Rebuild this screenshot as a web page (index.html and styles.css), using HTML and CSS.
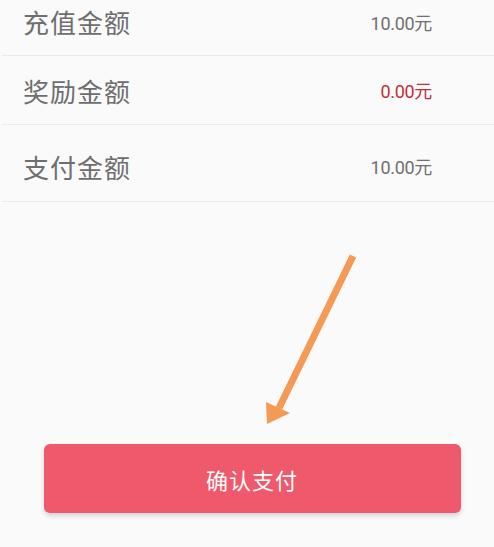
FILE: index.html
```html
<!DOCTYPE html>
<html lang="zh-CN">
<head>
    <meta charset="UTF-8">
    <meta name="viewport" content="width=device-width, initial-scale=1.0">
    <title>确认支付</title>
    <link rel="stylesheet" href="styles.css">
</head>
<body>

    <div class="page">
        <div class="list">
            <div class="row row-first">
                <span class="label">充值金额</span>
                <span class="value">10.00元</span>
            </div>
            <div class="row row-second">
                <span class="label">奖励金额</span>
                <span class="value value-red">0.00元</span>
            </div>
            <div class="row row-third">
                <span class="label">支付金额</span>
                <span class="value">10.00元</span>
            </div>
        </div>

        <div class="footer">
            <button class="pay-button">确认支付</button>
        </div>

        <!-- annotation arrow over the page -->
        <svg class="arrow" width="494" height="547" viewBox="0 0 494 547">
            <line x1="353" y1="256" x2="279" y2="408" stroke="#f59a55" stroke-width="7" />
            <polygon points="267,424 266,402 290,413" fill="#f59a55" />
        </svg>
    </div>

</body>
</html>
```

FILE: styles.css
```css
html, body {
    margin: 0;
    padding: 0;
    background-color: #fafafa;
}

body {
    font-family: "Noto Sans CJK SC", "Noto Sans", sans-serif;
}

.page {
    position: relative;
    width: 494px;
    height: 547px;
    overflow: hidden;
}

.list {
    margin-left: 2px;
}

.row {
    display: flex;
    justify-content: space-between;
    align-items: center;
    padding-left: 21px;
    padding-right: 62px;
    border-bottom: 1px solid #ebebeb;
    box-sizing: border-box;
}

.row-first {
    height: 56px;
    padding-bottom: 12px;
}

.row-second {
    height: 69px;
}

.row-third {
    height: 77px;
    padding-top: 6px;
}

.label {
    font-size: 26px;
    color: #6e6e6e;
    letter-spacing: 1px;
}

.value {
    font-family: Roboto, "Noto Sans CJK SC", sans-serif;
    font-size: 18px;
    color: #707070;
    letter-spacing: -0.3px;
}

.value-red {
    color: #c0303a;
}

.footer {
    display: flex;
    justify-content: center;
    padding-top: 242px;
}

.pay-button {
    width: 417px;
    height: 69px;
    margin-left: 10px;
    border: none;
    border-radius: 6px;
    background-color: #f0596b;
    color: #ffffff;
    font-family: "Noto Sans CJK SC", sans-serif;
    font-size: 22px;
    letter-spacing: 1px;
    box-shadow: 0 3px 5px rgba(0, 0, 0, 0.15);
}

.arrow {
    position: absolute;
    left: 0;
    top: 0;
}
```
